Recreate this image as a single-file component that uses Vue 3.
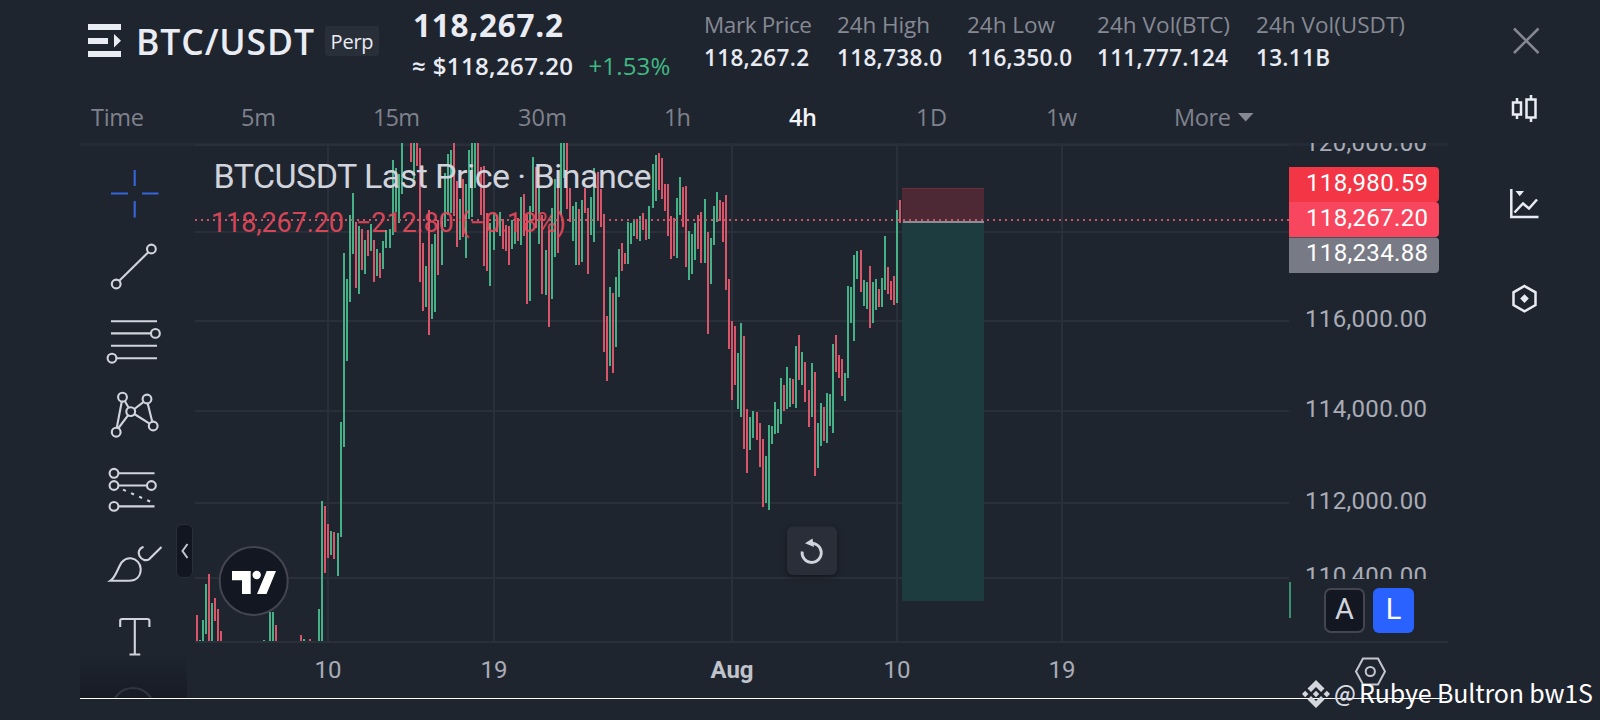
<script setup>
// Adjusts tracking so a label takes exactly the given width.
const vFit = {
  mounted(el, binding) {
    const natural = el.getBoundingClientRect().width
    const gaps = el.textContent.length - 1
    el.style.letterSpacing = `${(binding.value - natural) / gaps}px`
  },
}

const stats = [
  { label: 'Mark Price', lw: 108, value: '118,267.2', vw: 105, w: 133 },
  { label: '24h High', lw: 93, value: '118,738.0', vw: 105, w: 130 },
  { label: '24h Low', lw: 88, value: '116,350.0', vw: 105, w: 130 },
  { label: '24h Vol(BTC)', lw: 133, value: '111,777.124', vw: 131, w: 159 },
  { label: '24h Vol(USDT)', lw: 149, value: '13.11B', vw: 74, w: 160 },
]

const tabs = [
  { t: 'Time', w: 53, col: 150 },
  { t: '5m', w: 35, col: 132 },
  { t: '15m', w: 47, col: 145 },
  { t: '30m', w: 49, col: 146 },
  { t: '1h', w: 27, col: 125 },
  { t: '4h', w: 28, col: 127, on: true },
  { t: '1D', w: 31, col: 130 },
  { t: '1w', w: 31, col: 128 },
  { t: 'More', w: 57, col: 64 },
]

const rows = [145, 232, 321, 411, 503, 578]
const cols = [328, 494, 732, 897, 1062]

// x, high, low, direction (g = up, r = down)
const bars = `197 615 641 r|200 640 641 g|203 620 641 g|206 584 634 g|209 574 641 r|212 603 641 g|215 598 621 r|218 609 641 r|221 631 641 r
264 640 641 g|270 612 641 g|273 612 641 g|276 625 641 r|301 635 641 r|304 639 641 g|310 639 641 r|319 609 641 g|322 501 641 g|325 506 573 r|328 524 558 r
331 531 555 g|334 532 559 r|338 533 576 g|341 422 537 g|344 253 447 g|347 279 361 g|350 215 302 g|353 193 254 g|356 222 288 r|359 226 294 g|362 229 270 r
365 240 274 g|368 230 256 r|371 224 251 g|374 240 282 r|377 249 276 g|380 253 278 r|383 241 269 g|386 230 248 g|390 229 248 g|393 160 235 g|396 168 212 g
399 174 223 g|402 143 194 g|411 143 162 r|414 143 179 g|417 143 166 r|420 148 282 r|423 243 311 r|426 266 307 g|429 210 335 r|432 244 319 g|435 234 312 g
438 220 275 r|442 215 265 g|445 173 227 g|448 154 215 g|451 150 213 g|454 143 216 r|457 181 247 r|460 199 240 g|463 179 237 r|466 184 258 g|469 150 219 g
472 143 217 g|475 143 188 g|478 143 183 r|481 167 215 r|484 166 266 r|487 213 271 r|490 223 286 g|494 213 250 g|497 215 232 r|500 212 236 g|503 219 249 r
506 225 251 r|509 226 265 r|512 220 249 g|515 223 244 g|518 218 241 r|521 197 245 g|524 194 236 r|527 215 304 r|530 206 301 g|533 157 212 g|536 167 228 r
539 188 244 g|542 215 294 r|546 250 295 g|549 230 327 r|552 208 299 g|555 179 257 g|558 185 253 r|561 143 215 g|564 143 178 g|567 143 209 r|570 188 222 r
573 206 241 g|576 202 265 g|579 209 265 r|582 200 262 g|585 188 213 r|588 208 274 r|591 197 235 g|594 168 242 g|598 172 221 r|601 189 227 r|604 214 352 r
607 316 381 r|610 287 366 g|613 293 373 r|616 277 347 g|619 249 297 g|622 243 271 r|625 253 264 r|628 222 264 g|631 223 244 g|634 219 236 g|637 219 239 r
640 216 241 g|643 213 230 r|646 219 240 r|649 206 239 g|653 164 208 g|656 155 201 g|659 153 190 r|662 158 199 r|665 184 211 r|668 184 236 r|671 216 259 r
674 218 256 r|677 198 258 g|680 177 215 g|683 187 227 r|686 186 267 r|689 231 280 g|692 234 274 g|695 223 260 g|698 215 249 r|701 212 263 r|705 199 263 g
708 232 334 r|711 238 284 g|714 206 245 g|717 192 222 g|720 200 221 r|723 202 242 r|726 195 290 r|729 279 349 r|732 321 400 r|735 326 385 r|738 353 409 g
741 323 417 g|744 336 449 r|747 409 473 r|750 417 450 g|753 411 438 g|757 412 440 r|760 423 467 r|763 439 507 r|766 456 503 g|769 425 510 g|772 426 444 g
775 402 434 g|778 409 433 g|781 378 424 g|784 385 411 r|787 367 409 g|790 378 407 g|793 379 404 r|796 346 408 g|799 335 380 r|802 352 385 g|805 362 402 r
809 390 427 r|812 363 417 g|815 372 476 r|818 423 468 g|821 403 446 g|824 407 441 r|827 393 443 g|830 394 426 g|833 344 433 g|836 335 372 r|839 355 378 r
842 359 396 r|845 373 401 g|848 286 378 g|851 287 323 g|854 255 341 g|857 251 279 g|861 250 292 r|864 280 306 g|867 282 309 g|870 266 328 r|873 282 323 g
876 279 310 g|879 289 307 r|882 278 307 g|885 236 290 g|888 267 294 r|891 281 300 r|894 276 305 r|897 210 303 g|900 200 223 r`
  .split(/[|\n]/)
  .map((s) => {
    const [x, y1, y2, d] = s.trim().split(' ')
    return { x: x - 1, y: +y1, h: y2 - y1, d }
  })

const prices = [
  ['120,000.00', 151],
  ['116,000.00', 327],
  ['114,000.00', 417],
  ['112,000.00', 509],
  ['110,400.00', 584],
]
const tags = [
  ['118,980.59', 191],
  ['118,267.20', 226],
  ['118,234.88', 261],
]
const times = [
  ['10', 328],
  ['19', 494],
  ['Aug', 732],
  ['10', 897],
  ['19', 1062],
]

const tools = [
  { d: 'M134.7 170V186M134.7 201V217.5M111 193.5H128M142 193.5H158.5', c: [], blue: true },
  { d: 'M119.3 280.8L148.3 252.2', c: [[116.2, 284], [151.4, 249]] },
  { d: 'M111 321.2H157M111 333.4H151M111 345.8H157M117 358.2H157', c: [[155.4, 333.4], [112, 358.2]] },
  {
    d: 'M116.8 427.5L121.8 401.5M118.5 428L128 415.3M124.8 401L128.5 407.5M134.4 409L143.3 402.2M134.3 414L149.2 423.3M147.7 403.5L152.2 421.5',
    c: [[122.5, 397.2], [147, 399], [130.7, 411.6], [153.2, 426], [116.2, 432.2]],
  },
  {
    d: 'M118.6 473.3H154.5M118.6 485.5H147M118.6 506.4H154.5',
    dots: 'M123 489.6L152 502.3',
    c: [[114, 473.3], [114, 485.5], [151.4, 485.5], [114, 506.4]],
  },
  {
    d: 'M110.5 580.7C116 577 118.5 566 122 562C125 558.8 128.5 558 131 558.3C136.5 559 140.7 563.5 140.7 569C140.7 576 136.5 580.7 129 580.7ZM143.5 546.8C139 548.5 137.5 552.5 139.5 556C141.5 559.5 145.5 561.3 149 559.3L161.5 547',
    c: [],
  },
  { d: 'M120.2 627V620.5Q120.2 619 122 619H147.5Q149.4 619 149.4 620.5V627M134.8 619V654.5M129.5 654.5H140.3', c: [] },
]
</script>

<template>
  <main class="screen">
    <header class="head">
      <svg class="menu" width="34" height="34" viewBox="0 0 34 34">
        <path d="M0 0H33V6H0ZM0 14H20V20H0ZM0 27H33V33H0ZM26 10L33 16.8L26 23.5Z" />
      </svg>
      <h1><span v-fit="178">BTC/USDT</span></h1>
      <span class="perp"><span v-fit="43">Perp</span></span>
      <div class="quote">
        <div class="last"><span v-fit="150">118,267.2</span></div>
        <div class="fiat">
          <span v-fit="161">≈ $118,267.20</span>
          <span v-fit="82" class="gain">+1.53%</span>
        </div>
      </div>
      <dl class="stats">
        <div v-for="s in stats" :key="s.label" :style="{ width: s.w + 'px' }">
          <dt><span v-fit="s.lw">{{ s.label }}</span></dt>
          <dd><span v-fit="s.vw">{{ s.value }}</span></dd>
        </div>
      </dl>
    </header>

    <nav class="tabs">
      <div v-for="t in tabs" :key="t.t" :class="{ on: t.on }" :style="{ width: t.col + 'px' }">
        <span v-fit="t.w">{{ t.t }}</span>
      </div>
      <svg width="16" height="9" viewBox="0 0 16 9"><path d="M0 0H15.500L7.700 8.500Z" fill="#868993" /></svg>
    </nav>

    <section class="body">
      <aside class="tools">
        <svg
          v-for="(t, i) in tools"
          :key="i"
          width="60"
          height="74"
          :viewBox="`104 ${156 + 74 * i} 60 74`"
          :class="{ blue: t.blue }"
        >
          <path :d="t.d" />
          <path v-if="t.dots" :d="t.dots" stroke-dasharray="3.2 5.600" />
          <circle v-for="(c, j) in t.c" :key="j" :cx="c[0]" :cy="c[1]" r="4.400" />
        </svg>
        <div class="fade">
          <svg width="60" height="12" viewBox="0 0 60 12"><circle cx="30" cy="23" r="21" /></svg>
        </div>
      </aside>

      <svg class="chart" width="1260" height="557" viewBox="188 143 1260 557">
        <g stroke="#2a3039" stroke-width="2">
          <path v-for="y in rows" :key="y" :d="`M195 ${y}H1289`" />
          <path v-for="x in cols" :key="x" :d="`M${x} 143V642`" />
          <path d="M195 642H1448" />
        </g>
        <rect v-for="(b, i) in bars" :key="i" :x="b.x" :y="b.y" width="2" :height="b.h" :class="b.d" />
        <rect x="902" y="188" width="82" height="34" fill="#4c2934" />
        <rect x="902" y="188" width="82" height="1" fill="#6b2d3a" />
        <rect x="902" y="222" width="82" height="379" fill="#1d3c40" />
        <rect x="903" y="221" width="81" height="2" fill="#8f8b92" />
        <path d="M195 220H1289" stroke="#c8566a" stroke-width="2" stroke-dasharray="2 4" />

        <text x="213.500" y="188" font-size="34" fill="#d1d4dc" textLength="438" class="rb">BTCUSDT Last Price · Binance</text>
        <g font-size="27" class="rb" fill="#e8495d" fill-opacity=".92">
          <text x="211" y="232" textLength="133">118,267.20</text>
          <text x="356" y="232" textLength="210">−212.80 (−0.18%)</text>
        </g>

        <g font-size="24" fill="#a9acb6" class="rb">
          <svg x="1290" y="143" width="160" height="436" viewBox="1290 143 160 436">
            <text v-for="p in prices" :key="p[0]" x="1305" :y="p[1]" textLength="122">{{ p[0] }}</text>
          </svg>
          <text
            v-for="t in times"
            :key="t[1]"
            :x="t[1]"
            y="678"
            text-anchor="middle"
            :class="{ month: t[0] === 'Aug' }"
          >{{ t[0] }}</text>
        </g>
        <path d="M1289 167H1435Q1439 167 1439 171V198Q1439 202 1435 202H1289Z" fill="#f23645" />
        <path d="M1289 202H1435Q1439 202 1439 206V233Q1439 237 1435 237H1289Z" fill="#f7465d" />
        <path d="M1289 237.500H1435Q1439 237.500 1439 241V269Q1439 273 1435 273H1289Z" fill="#787b86" />
        <g font-size="24" fill="#fff" class="rb">
          <text v-for="t in tags" :key="t[0]" x="1306" :y="t[1]" textLength="122">{{ t[0] }}</text>
        </g>

        <rect x="1289" y="582" width="2" height="36" fill="#38926f" />
        <rect x="1325" y="589" width="39" height="43" rx="6" fill="#131722" stroke="#434651" stroke-width="2" />
        <rect x="1373" y="588" width="41" height="45" rx="6" fill="#2962ff" />
        <g font-size="29" class="rb" text-anchor="middle">
          <text x="1344.500" y="619" fill="#d1d4dc">A</text>
          <text x="1393.500" y="619" fill="#fff">L</text>
        </g>
        <g fill="none" stroke="#c3c6ce" stroke-width="2">
          <path d="M1363 658.500H1378L1385 671.500L1378 684.500H1363L1356 671.500Z" />
          <circle cx="1370.300" cy="671.500" r="4.600" />
        </g>

        <circle cx="253.700" cy="581" r="34" fill="#131722" stroke="#434651" stroke-width="2" />
        <path d="M232 571H250.700V594H242V580.300H232ZM266.700 571H276L266.500 594H257Z" fill="#fff" />
        <circle cx="256.700" cy="575" r="4.200" fill="#fff" />

        <rect x="787" y="526.500" width="50" height="48.500" rx="6" fill="#2a2e39" class="btn" />
        <path d="M802.200 551.500A9.600 9.600 0 1 0 811 543.300" fill="none" stroke="#d1d4dc" stroke-width="2.800" />
        <path d="M805 543.300L812.500 538.500L814 547Z" fill="#d1d4dc" />
      </svg>

      <div class="handle">
        <svg width="8" height="16" viewBox="0 0 8 16"><path d="M6.500 1L1.500 8L6.500 15" /></svg>
      </div>
    </section>

    <aside class="rail">
      <svg width="30" height="30" viewBox="1511 26 30 30" class="dim"><path d="M1514 28.500L1538.500 53M1538.500 28.500L1514 53" /></svg>
      <svg width="30" height="32" viewBox="1509 93 30 32">
        <path d="M1513 102.500H1521V114.500H1513ZM1517 98V102M1517 115V119M1526.500 99.500H1535.500V117.500H1526.500ZM1531 95V99M1531 118V122" />
      </svg>
      <svg width="32" height="32" viewBox="1509 188 32 32">
        <path d="M1511.300 189V217H1538.500M1514.500 212.500L1523 203.500L1529 208.500L1537 199.500" />
        <path d="M1515.500 191H1524L1519.700 196.300Z" class="solid" />
      </svg>
      <svg width="30" height="32" viewBox="1509 283 30 32">
        <path d="M1524.500 286L1535.500 292.300V305L1524.500 311.300L1513.500 305V292.300Z" />
        <path d="M1524.500 294.300L1528.800 298.600L1524.500 302.900L1520.200 298.600Z" class="solid" />
      </svg>
    </aside>

    <div class="baseline"></div>
    <footer class="mark">
      <svg width="28" height="28" viewBox="0 0 28 28">
        <path
          d="M14 0L22.500 8.500L19 12L14 7L9 12L5.500 8.500ZM14 28L22.500 19.500L19 16L14 21L9 16L5.500 19.500ZM3.200 10.800L6.400 14L3.200 17.200L0 14ZM24.800 10.800L28 14L24.800 17.200L21.600 14ZM14 10.800L17.200 14L14 17.200L10.800 14Z"
        />
      </svg>
      <span class="at">@</span>
      <span v-fit="234">Rubye Bultron bw1S</span>
    </footer>
  </main>
</template>

<style>
body {
  background: #1f252f;
  overflow: hidden;
}
</style>

<style scoped>
.screen {
  position: relative;
  width: 1600px;
  height: 720px;
  overflow: hidden;
  background: #1f252f;
  color: #eaecf3;
  font-family: "Open Sans", "Noto Sans", sans-serif;
  white-space: nowrap;
}
span { display: inline-block; }
svg { display: block; flex: none; }
.head {
  display: flex;
  align-items: flex-start;
  height: 96px;
  padding-left: 88px;
  box-sizing: border-box;
}
.menu { margin-top: 24px; fill: #eaecf3; }
h1 {
  margin: 18px 0 0 14px;
  width: 189px;
  font-size: 35.5px;
  line-height: 46px;
  font-weight: 650;
}
.perp {
  width: 54px;
  height: 30px;
  margin-top: 26px;
  border-radius: 3px;
  background: #292f39;
  font-size: 20px;
  line-height: 32px;
  text-align: center;
}
.quote { width: 292px; margin-left: 33px; }
.last {
  padding-left: 1px;
  font-size: 31.5px;
  line-height: 42px;
  font-weight: 700;
  margin-top: 4px;
}
.fiat {
  display: flex;
  gap: 15px;
  font-size: 24px;
  line-height: 32px;
  font-weight: 600;
  margin-top: 4px;
}
.gain { color: #3fb984; font-weight: 500; }
.stats { display: flex; margin: 9px 0 0; }
.stats dt, .stats dd { margin: 0; line-height: 32px; height: 33px; }
.stats dt { font-size: 22.5px; color: #868993; }
.stats dd { font-size: 22.5px; font-weight: 600; }
.tabs {
  display: flex;
  align-items: center;
  height: 43px;
  padding-left: 91px;
  font-size: 23.5px;
  color: #7f828d;
}
.tabs div { margin-top: -1px; }
.tabs .on { color: #f4f5fa; font-weight: 650; }
.body {
  position: relative;
  display: flex;
  width: 1368px;
  height: 557px;
  margin: 4px 0 0 80px;
}
.body::before {
  content: "";
  position: absolute;
  top: 0;
  left: 0;
  width: 1368px;
  height: 3px;
  background: #252b35;
}
.tools {
  position: relative;
  width: 108px;
  padding: 13px 0 0 24px;
  box-sizing: border-box;
  height: 555px;
  overflow: hidden;
}
.tools svg { fill: none; stroke: #d1d4dc; stroke-width: 2.1; }
.tools svg.blue { stroke: #3566dc; }
.tools .fade {
  position: absolute;
  left: 0;
  bottom: 0;
  width: 107px;
  height: 42px;
  background: linear-gradient(#1e242e, #161b25);
}
.tools .fade svg { position: absolute; left: 23px; bottom: 0; stroke: #30353f; }
.chart { position: relative; }
.chart .g { fill: #46b087; }
.chart .r { fill: #d9556a; }
.rb { font-family: Roboto, sans-serif; }
.month { font-weight: 700; fill: #c0c3cb; }
.btn { filter: drop-shadow(0 2px 3px rgba(0, 0, 0, 0.4)); }
.handle {
  position: absolute;
  left: 96px;
  top: 381px;
  width: 15px;
  height: 52px;
  border: 1px solid #292e38;
  border-radius: 6px;
  background: #121620;
  display: grid;
  place-items: center;
}
.handle path { fill: none; stroke: #c3c6ce; stroke-width: 2; }
.rail {
  position: absolute;
  left: 1509px;
  top: 26px;
  display: flex;
  flex-direction: column;
}
.rail svg { fill: none; stroke: #eaecf3; stroke-width: 2.5; }
.rail svg + svg { margin-top: 63px; }
.rail svg:nth-child(1) { margin: 0 0 -26px 2px; }
.rail .dim { stroke: #858891; }
.rail .solid { fill: #eaecf3; stroke: none; }
.rail svg:nth-child(2) { margin-top: 63px; }
.baseline {
  position: absolute;
  left: 80px;
  top: 698px;
  width: 1367px;
  height: 1px;
  background: #fff;
}
.mark {
  position: absolute;
  left: 1302px;
  top: 674px;
  display: flex;
  align-items: center;
  height: 37px;
  font-family: "Noto Sans CJK SC", sans-serif;
  font-size: 25px;
  line-height: 37px;
  color: #fff;
}
.mark svg { fill: #d3d6dc; margin-top: 2px; }
.mark .at { width: 25px; margin-left: 4px; font-size: 22.5px; font-weight: 500; color: #d7dae0; }
</style>
